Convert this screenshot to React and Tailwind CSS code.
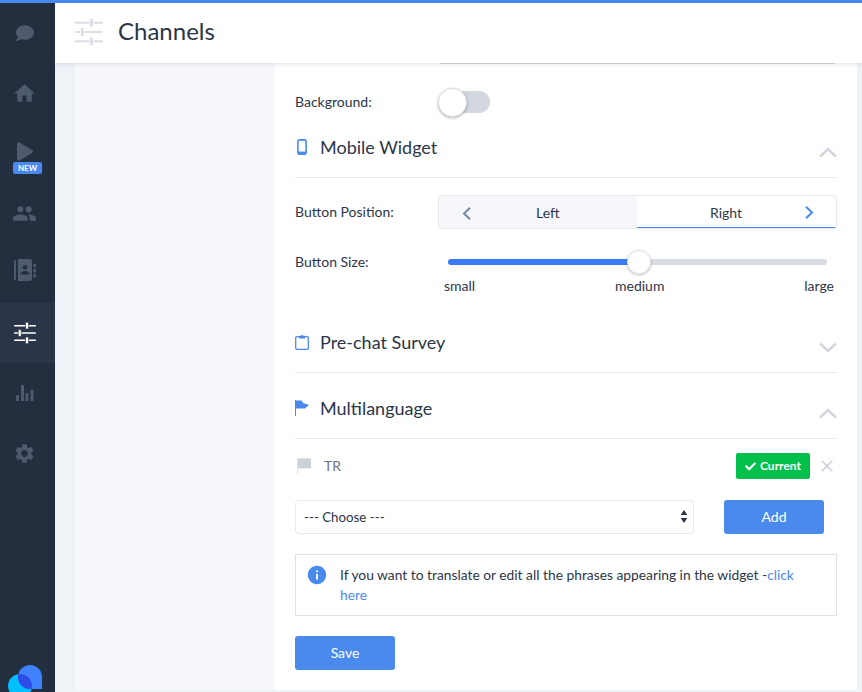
import React from 'react'
import { MdHome, MdPeople, MdSettings, MdInfo, MdClose } from 'react-icons/md'
import { FaComment, FaPlay, FaCheck } from 'react-icons/fa'

function Sliders({ className, knob, edge }) {
  return (
    <svg viewBox="0 0 26 26" className={className} fill="currentColor">
      <rect x="0" y="3.4" width="26" height="2" rx="1" />
      <rect x="0" y="12" width="26" height="2" rx="1" />
      <rect x="0" y="20.6" width="26" height="2" rx="1" />
      <rect x="13.6" y="0.4" width="3.6" height="8" rx="1.2" fill={knob} stroke={edge} strokeWidth="0.8" />
      <rect x="5" y="9" width="3.6" height="8" rx="1.2" fill={knob} stroke={edge} strokeWidth="0.8" />
      <rect x="13.6" y="17.6" width="3.6" height="8" rx="1.2" fill={knob} stroke={edge} strokeWidth="0.8" />
    </svg>
  )
}

function Bars({ className }) {
  return (
    <svg viewBox="0 0 18 16" className={className} fill="currentColor">
      <rect x="0" y="10" width="3" height="6" rx="0.5" />
      <rect x="5" y="0" width="3" height="16" rx="0.5" />
      <rect x="9.5" y="8" width="3" height="8" rx="0.5" />
      <rect x="14.5" y="5" width="3" height="11" rx="0.5" />
    </svg>
  )
}

function ContactBook({ className }) {
  return (
    <svg viewBox="0 0 22 22" className={className} fill="currentColor">
      <rect x="0" y="1" width="2" height="20" rx="1" />
      <path d="M4 0h12a2 2 0 0 1 2 2v18a2 2 0 0 1-2 2H4z" />
      <rect x="19.3" y="5" width="2.7" height="3.4" rx="0.6" />
      <rect x="19.3" y="10" width="2.7" height="3.4" rx="0.6" />
      <rect x="19.3" y="15" width="2.7" height="3.4" rx="0.6" />
      <circle cx="11" cy="8.2" r="2.3" fill="#232e3f" />
      <path d="M6.5 15.5c0-2.4 2.3-3.6 4.5-3.6s4.5 1.2 4.5 3.6z" fill="#232e3f" />
    </svg>
  )
}

function Phone() {
  return (
    <svg viewBox="0 0 10 16" className="w-[10px] h-[16px] ml-[2px]" fill="none" stroke="currentColor">
      <rect x="0.9" y="0.9" width="8.2" height="14.2" rx="1.4" strokeWidth="1.6" />
      <rect x="1" y="12.6" width="8" height="2.6" fill="currentColor" stroke="none" />
    </svg>
  )
}

function Clipboard() {
  return (
    <svg viewBox="0 0 14 16" className="w-[14px] h-[16px]" fill="none" stroke="currentColor">
      <path d="M4 2.6H1.8A1.1 1.1 0 0 0 .7 3.7v10.5c0 .6.5 1.1 1.1 1.1h10.4c.6 0 1.1-.5 1.1-1.1V3.7c0-.6-.5-1.1-1.1-1.1H10" strokeWidth="1.3" />
      <path d="M4 1.8h1.8a1.3 1.3 0 0 1 2.4 0H10v2.8H4z" fill="currentColor" stroke="none" />
    </svg>
  )
}

function BlueFlag() {
  return (
    <svg viewBox="0 0 14 16" className="w-[14px] h-[16px]" fill="currentColor">
      <rect x="0" y="0" width="1" height="16" />
      <path d="M1 .6h5.5l2 2.6L14 4.8 10 8.4H1z" />
    </svg>
  )
}

function GrayFlag() {
  return (
    <svg viewBox="0 0 14 16" className="w-[14px] h-[16px] ml-[2px] text-[#ccd2da]" fill="currentColor">
      <rect x="0" y="0" width="1" height="16" fill="#dfe3e8" />
      <path d="M1 .4h13v10H1z" />
    </svg>
  )
}

function Chevron({ up }) {
  return (
    <svg viewBox="0 0 18 11" className="w-[18px] h-[11px] ml-auto mt-[10px]" fill="none" stroke="#d3d6de" strokeWidth="2.6">
      <polyline points={up ? '1,9.6 9,2 17,9.6' : '1,1.4 9,9 17,1.4'} />
    </svg>
  )
}

function NavItem({ children, active }) {
  return (
    <div className={`h-[60px] flex items-center justify-center pr-[6px] relative ${active ? 'bg-[#2a3549] text-white' : 'text-[#4e5a6e]'}`}>
      {children}
    </div>
  )
}

function Sidebar() {
  return (
    <aside className="w-[55px] shrink-0 bg-[#232e3f] flex flex-col relative overflow-hidden">
      <NavItem><FaComment className="w-[18px] h-[18px]" /></NavItem>
      <NavItem><MdHome className="w-[25px] h-[25px]" /></NavItem>
      <NavItem>
        <FaPlay className="w-[16px] h-[19px] -mt-[3px]" />
        <span className="absolute left-[13px] top-[39px] w-[29px] h-[12px] rounded-[2px] bg-[#4a8af0] text-white text-[8px] leading-[12px] font-bold text-center">NEW</span>
      </NavItem>
      <NavItem><MdPeople className="w-[25px] h-[25px]" /></NavItem>
      <NavItem><ContactBook className="w-[22px] h-[22px] -mt-[6px]" /></NavItem>
      <NavItem active><Sliders className="w-[22px] h-[22px]" knob="#ffffff" edge="#2a3549" /></NavItem>
      <NavItem><Bars className="w-[18px] h-[16px]" /></NavItem>
      <NavItem><MdSettings className="w-[23px] h-[23px]" /></NavItem>

      {/* logo, cut off by the window bottom */}
      <svg viewBox="0 0 36 30" className="absolute left-[8px] bottom-0 w-[36px] h-[27px]" preserveAspectRatio="xMinYMin slice">
        <defs>
          <clipPath id="logoClip"><circle cx="12" cy="21" r="12" /></clipPath>
        </defs>
        <circle cx="12" cy="21" r="12" fill="#00bfff" />
        <path d="M10 12a12 12 0 0 1 24 0v12H22a12 12 0 0 1-12-12z" fill="#3f80ff" />
        <path d="M10 12a12 12 0 0 1 24 0v12H22a12 12 0 0 1-12-12z" fill="#2f4be8" clipPath="url(#logoClip)" />
      </svg>
    </aside>
  )
}

function SectionHead({ icon, title, open }) {
  return (
    <div className="h-[61px] flex items-center border-b border-[#e8eaef]">
      <span className="w-[25px] flex text-[#4a8af0]">{icon}</span>
      <h2 className="text-[18px] text-[#2c3649]">{title}</h2>
      <Chevron up={open} />
    </div>
  )
}

export default function App() {
  return (
    <div className="h-[692px] w-[862px] overflow-hidden flex flex-col bg-[#eff2f7] text-[#2c3649] text-[14px]" style={{ fontFamily: 'Lato, sans-serif' }}>
      <div className="h-[3px] shrink-0 bg-[#4a8af0]" />
      <div className="flex flex-1 min-h-0">
        <Sidebar />
        <div className="flex-1 flex flex-col min-w-0">
          <header className="h-[60px] shrink-0 bg-white flex items-center pl-[20px] shadow-[0_1px_4px_rgba(40,50,80,0.15)] relative z-10">
            <Sliders className="w-[28px] h-[28px] text-[#dcdee6] -mt-[2px]" knob="#dcdee6" edge="#ffffff" />
            <h1 className="ml-[15px] text-[24px] text-[#2c3649] -mt-[4px]">Channels</h1>
          </header>
          <div className="flex-1 min-h-0 flex pl-[20px] pr-[5px] pb-[2px]">
            <div className="w-[200px] shrink-0 bg-[#f6f8fc]" />
            <main className="flex-1 bg-white px-[20px]">
              <div className="ml-[145px] mr-[2px] h-[1px] bg-[#d8dae0]" />

              <div className="flex items-center mt-[27px] h-[22px] mb-[4px]">
                <span className="w-[145px] -mt-[2px]">Background:</span>
                <div className="relative w-[50px] h-[22px] rounded-full bg-[#d3d7e0]">
                  <span className="absolute -left-[2px] -top-[3px] w-[29px] h-[29px] rounded-full bg-white border border-[#dfe1e6] shadow-[0_1px_3px_rgba(0,0,0,0.3)]" />
                </div>
              </div>

              <SectionHead icon={<Phone />} title="Mobile Widget" open />

              <div className="flex items-center mt-[17px]">
                <span className="w-[143px] -mt-[2px]">Button Position:</span>
                <div className="flex-1 h-[34px] flex border border-[#e8eaef] rounded-[3px] overflow-hidden">
                  <div className="w-[198px] bg-[#f5f7fb] relative">
                    <svg viewBox="0 0 9 13" className="absolute left-[23px] top-[11px] w-[9px] h-[13px]" fill="none" stroke="#7187a6" strokeWidth="2">
                      <polyline points="8,0.8 2,6.5 8,12.2" />
                    </svg>
                    <span className="absolute left-[97px] top-[8px] leading-[18px]">Left</span>
                  </div>
                  <div className="flex-1 bg-white relative border-b border-[#4a8af0]">
                    <span className="absolute left-[73px] top-[8px] leading-[18px]">Right</span>
                    <svg viewBox="0 0 9 13" className="absolute right-[22px] top-[10px] w-[9px] h-[13px]" fill="none" stroke="#4a8af0" strokeWidth="2">
                      <polyline points="1,0.8 7,6.5 1,12.2" />
                    </svg>
                  </div>
                </div>
              </div>

              <div className="flex mt-[22px]">
                <span className="w-[149px] shrink-0">Button Size:</span>
                <div className="w-[392px] shrink-0">
                  <div className="relative h-[22px] flex items-center ml-[4px]">
                    <div className="absolute left-0 w-[379px] h-[6px] rounded-full bg-[#d8dbe1]" />
                    <div className="absolute left-0 w-[191px] h-[6px] rounded-l-full bg-[#3b7cf6]" />
                    <span className="absolute left-[179px] w-[24px] h-[24px] rounded-full bg-white border border-[#e6e8ec] shadow-[0_1px_3px_rgba(0,0,0,0.25)]" />
                  </div>
                  <div className="flex justify-between mt-[3px] leading-[20px] pr-[2px]">
                    <span>small</span>
                    <span>medium</span>
                    <span>large</span>
                  </div>
                </div>
              </div>

              <div className="mt-[16px]">
                <SectionHead icon={<Clipboard />} title="Pre-chat Survey" />
              </div>
              <div className="mt-[5px]">
                <SectionHead icon={<BlueFlag />} title="Multilanguage" open />
              </div>

              <div className="flex items-center mt-[14px] h-[26px]">
                <GrayFlag />
                <span className="ml-[13px] -mt-[2px] text-[#6b7382]">TR</span>
                <span className="ml-auto w-[74px] h-[26px] rounded-[2px] bg-[#00c04b] text-white text-[12px] font-bold flex items-center justify-center gap-[4px]">
                  <FaCheck className="w-[11px] h-[11px]" />Current
                </span>
                <MdClose className="w-[20px] h-[20px] ml-[7px] text-[#cfd2da]" />
              </div>

              <div className="flex mt-[21px]">
                <div className="relative w-[399px]">
                  <select className="w-full h-[34px] border border-[#e8eaef] rounded-[4px] pl-[8px] pt-[2px] appearance-none bg-white text-[13.3px] outline-none">
                    <option>--- Choose ---</option>
                  </select>
                  <svg viewBox="0 0 8 14" className="absolute right-[6px] top-[10px] w-[8px] h-[13px]" fill="#2c3649">
                    <path d="M4 0l3.6 5.4H.4zM4 14L.4 8.6h7.2z" />
                  </svg>
                </div>
                <button className="ml-[30px] w-[100px] h-[34px] pb-[1px] rounded-[3px] bg-[#4a8aec] text-white">Add</button>
              </div>

              <div className="mt-[20px] h-[62px] border border-[#dfe2e8] flex pl-[10px] pt-[10px] leading-[20px] text-[13.8px]">
                <MdInfo className="w-[22px] h-[22px] text-[#4a8aec] shrink-0 -mt-[1px]" />
                <div className="ml-[12px]">
                  <p>If you want to translate or edit all the phrases appearing in the widget -<a className="text-[#4a8aec]">click</a></p>
                  <a className="text-[#4a8aec]">here</a>
                </div>
              </div>

              <button className="mt-[20px] block w-[100px] h-[34px] pb-[1px] rounded-[3px] bg-[#4a8aec] text-white">Save</button>
            </main>
          </div>
        </div>
      </div>
    </div>
  )
}
